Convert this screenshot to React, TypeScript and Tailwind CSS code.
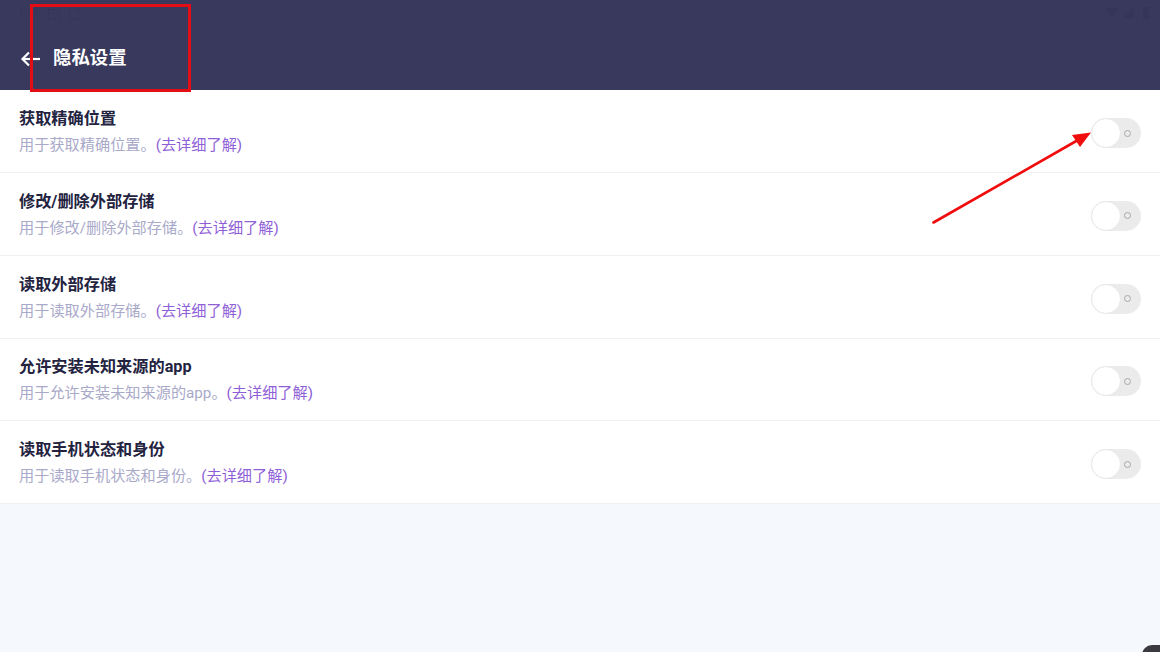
const rows = [
  { title: '获取精确位置', desc: '用于获取精确位置。' },
  { title: '修改/删除外部存储', desc: '用于修改/删除外部存储。' },
  { title: '读取外部存储', desc: '用于读取外部存储。' },
  { title: '允许安装未知来源的app', desc: '用于允许安装未知来源的app。' },
  { title: '读取手机状态和身份', desc: '用于读取手机状态和身份。' },
];

function Toggle() {
  return (
    <div className="mt-[4px] flex h-[30px] w-[50px] items-center justify-between rounded-full bg-[#ebebeb] pr-[10px]">
      <div className="h-[30px] w-[30px] rounded-full border border-[#e8e8e8] bg-white" />
      <div className="h-[7px] w-[7px] rounded-full border border-[#a8a8a8]" />
    </div>
  );
}

export default function App() {
  return (
    <div className="relative flex h-[652px] w-[1160px] flex-col overflow-hidden bg-[#f5f8fd] font-['Roboto','Noto_Sans_CJK_SC',sans-serif]">
      {/* Header */}
      <div className="flex h-[90.25px] shrink-0 items-end gap-[12px] bg-[#38395c] pb-[20px] pl-[20px] text-white">
        <svg width="21" height="18" viewBox="0 0 21 18" fill="none" stroke="white" strokeWidth="2.2" className="mb-[2px]">
          <path d="M9 2.5 L2.5 9 L9 15.5" />
          <path d="M3 9 H20" />
        </svg>
        <span className="text-[18.4px] leading-[24px] font-bold">隐私设置</span>
      </div>

      {/* Status bar, barely visible */}
      <div className="absolute top-[5px] right-[8px] left-[18px] flex items-center justify-between opacity-20">
        <div className="flex items-center gap-[9px] text-[#2a2a48]">
          <span className="text-[11px] leading-[18px]">1:11</span>
          <span className="h-[11px] w-[12px] border border-[#2a2a48]" />
          <span className="h-[11px] w-[10px] border border-[#2a2a48]" />
        </div>
        <svg width="48" height="16" viewBox="0 0 48 16" fill="#2a2a48">
          <path d="M1 3 Q8 -1 15 3 L8 12 Z" />
          <path d="M19 12 L30 2 V12 Z" />
          <rect x="39" y="1" width="6" height="12" />
        </svg>
      </div>

      {/* Permission list */}
      <div className="flex flex-col bg-white">
        {rows.map((row) => (
          <div
            key={row.title}
            className="flex h-[82.75px] items-center justify-between border-b border-[#f0f1f4] px-[19px]"
          >
            <div className="mt-[2px] flex flex-col gap-[5px]">
              <span className="text-[16.2px] leading-[22px] font-bold text-[#23233f]">{row.title}</span>
              <span className="text-[15.2px] leading-[21px] text-[#a9a9c9]">
                {row.desc}
                <span className="text-[#8f5fd8]">(去详细了解)</span>
              </span>
            </div>
            <Toggle />
          </div>
        ))}
      </div>

      {/* Corner of a dark overlay */}
      <div className="absolute top-[645px] left-[1142px] h-[20px] w-[30px] rounded-tl-[10px] bg-[#3a3a40]" />

      {/* Red annotations */}
      <div className="absolute top-[4px] left-[30px] h-[88px] w-[161px] border-[3px] border-[#e30d13]" />
      <svg className="absolute top-[130px] left-[930px]" width="165" height="96" viewBox="0 0 165 96" fill="none">
        <path d="M3.5 92.5 L148 10" stroke="#f00d0d" strokeWidth="2.6" strokeLinecap="round" />
        <path d="M161 2.5 L142 5 L150 17 Z" fill="#f00d0d" />
      </svg>
    </div>
  );
}
